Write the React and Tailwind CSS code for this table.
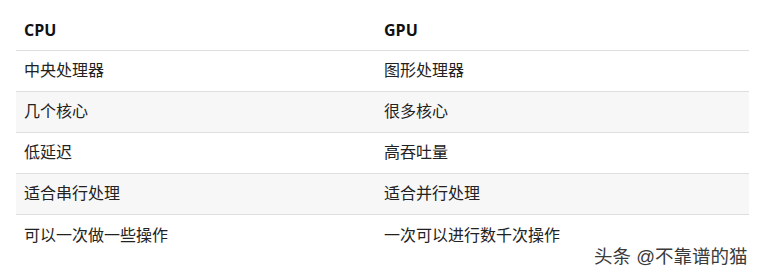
export default function App() {
  const rows = [
    ["中央处理器", "图形处理器"],
    ["几个核心", "很多核心"],
    ["低延迟", "高吞吐量"],
    ["适合串行处理", "适合并行处理"],
    ["可以一次做一些操作", "一次可以进行数千次操作"],
  ];
  const font = { fontFamily: '"Liberation Sans", "Noto Sans CJK SC", sans-serif' };
  const headFont = { fontFamily: '"Open Sans", "Liberation Sans", sans-serif' };
  return (
    <div className="relative w-[762px] h-[273px] bg-white overflow-hidden text-[#222]" style={font}>
      <div className="ml-4 mt-[10px] w-[733px]">
        <div
          className="grid grid-cols-[360px_1fr] h-[41px] items-center border-b border-[#dedede] font-bold text-[16px] text-[#111]"
          style={headFont}
        >
          <div className="pl-2">CPU</div>
          <div className="pl-2">GPU</div>
        </div>
        {rows.map((r, i) => (
          <div
            key={i}
            className={
              "grid grid-cols-[360px_1fr] h-[41px] items-center text-[16px] " +
              (i % 2 === 1 ? "bg-[#f7f7f7] " : "bg-white ") +
              (i < rows.length - 1 ? "border-b border-[#dedede]" : "")
            }
          >
            <div className="pl-2">{r[0]}</div>
            <div className="pl-2">{r[1]}</div>
          </div>
        ))}
      </div>
      <div
        className="absolute left-[594px] top-[245px] text-[18.5px] leading-[24px] text-[#3a3a3a] whitespace-nowrap [text-shadow:0_0_2px_#fff,0_0_2px_#fff]"
      >
        头条 @不靠谱的猫
      </div>
    </div>
  );
}
